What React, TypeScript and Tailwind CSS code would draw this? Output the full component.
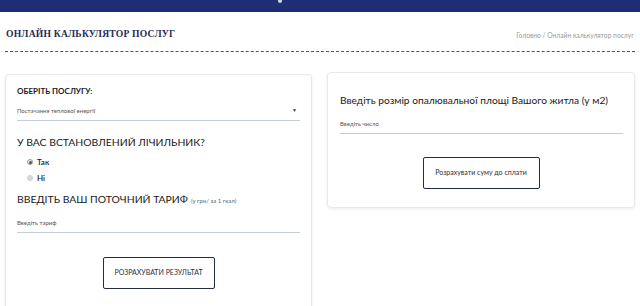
import React from "react";

const sans = "font-['Lato','Liberation_Sans',sans-serif]";

function Underline({ children, arrow = false }: { children: React.ReactNode; arrow?: boolean }) {
  return (
    <div className="flex items-center justify-between border-b border-[#c5cdd8] pb-[5px]">
      <span className="text-[6px] text-[#555]">{children}</span>
      {arrow && <span className="mr-[3px] text-[5px] text-[#333]">▼</span>}
    </div>
  );
}

function Radio({ label, checked }: { label: string; checked?: boolean }) {
  return (
    <label className="flex items-center gap-[4px] text-[8px] font-semibold text-[#222]">
      <span
        className={`flex h-[6px] w-[6px] items-center justify-center rounded-full border ${
          checked ? "border-[#999] bg-[#eee]" : "border-[#ccc] bg-[#ddd]"
        }`}
      >
        {checked && <span className="h-[3px] w-[3px] rounded-full bg-[#555]" />}
      </span>
      <span className="text-[#222]">{label}</span>
    </label>
  );
}

function OutlineButton({ children, className }: { children: React.ReactNode; className: string }) {
  return (
    <button
      type="button"
      className={`rounded-[2px] border-[1.5px] border-[#232b45] bg-white text-[#2a2f3e] ${className}`}
    >
      {children}
    </button>
  );
}

export default function App() {
  return (
    <div className={`h-[306px] w-[640px] overflow-hidden bg-white ${sans}`}>
      {/* top bar */}
      <div className="relative h-[12px] bg-[#1e2d74]">
        <span className="absolute left-[278px] top-0 h-[3px] w-[4px] rounded-b-full bg-[#cfd6ea]" />
      </div>

      {/* page header */}
      <div className="flex items-end justify-between px-[6px] pt-[15px]">
        <h1 className="font-['Liberation_Serif',serif] text-[9.6px] font-bold tracking-[0.2px] text-[#1f2c55]">
          ОНЛАЙН КАЛЬКУЛЯТОР ПОСЛУГ
        </h1>
        <div className="pb-[1px] text-[6.7px] text-[#999]">Головно / Онлайн калькулятор послуг</div>
      </div>
      <div className="mx-[5px] mt-[10px] border-t border-dashed border-[#555]" />

      {/* cards */}
      <div className="flex items-start gap-[15px] px-[5px] pt-[22px]">
        <div className="h-[250px] w-[308px] rounded-[4px] border border-[#e6e8ec] px-[11px] pt-[10px] shadow-[0_1px_3px_rgba(0,0,0,0.08)]">
          <div className="text-[8px] font-bold text-[#1a1a1a]">ОБЕРІТЬ ПОСЛУГУ:</div>
          <div className="mt-[9px]">
            <Underline arrow>Постачання теплової енергії</Underline>
          </div>
          <div className="mt-[14px] text-[10.4px] text-[#1a1a1a]">У ВАС ВСТАНОВЛЕНИЙ ЛІЧИЛЬНИК?</div>
          <div className="ml-[10px] mt-[5px] flex flex-col gap-[4px]">
            <Radio label="Так" checked />
            <Radio label="Ні" />
          </div>
          <div className="mt-[8px] flex items-baseline gap-[3px] text-[#1a1a1a]">
            <span className="text-[10.4px]">ВВЕДІТЬ ВАШ ПОТОЧНИЙ ТАРИФ</span>
            <span className="text-[6px] text-[#666]">(у грн/ за 1 гкал)</span>
          </div>
          <div className="mt-[10px]">
            <Underline>Введіть тариф</Underline>
          </div>
          <div className="mt-[24px] flex justify-center">
            <OutlineButton className="h-[32px] w-[112px] text-[7px]">РОЗРАХУВАТИ РЕЗУЛЬТАТ</OutlineButton>
          </div>
        </div>

        <div className="-mt-[2px] h-[136px] w-[309px] rounded-[4px] border border-[#e6e8ec] px-[12px] pt-[20px] shadow-[0_1px_3px_rgba(0,0,0,0.08)]">
          <div className="text-[10.2px] text-[#1a1a1a]">Введіть розмір опалювальної площі Вашого житла (у м2)</div>
          <div className="mr-[-1px] mt-[10px]">
            <Underline>Введіть число</Underline>
          </div>
          <div className="mt-[23px] flex justify-center">
            <OutlineButton className="h-[32px] w-[117px] text-[7px]">Розрахувати суму до сплати</OutlineButton>
          </div>
        </div>
      </div>
    </div>
  );
}
